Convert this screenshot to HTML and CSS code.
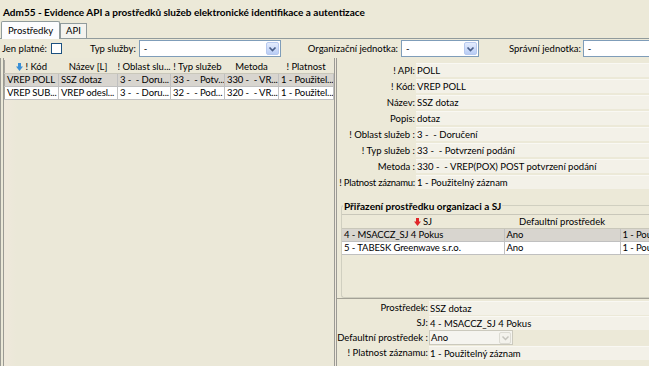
FILE: index.html
```html
<!DOCTYPE html>
<html lang="cs">
<head>
<meta charset="utf-8">
<title>Adm55</title>
<link rel="stylesheet" href="styles.css">
</head>
<body>
<div class="title">Adm55 - Evidence API a prostředků služeb elektronické identifikace a autentizace</div>
<div class="tabs">
  <div class="tab active">Prostředky</div>
  <div class="tab">API</div>
</div>
<div class="filters">
  <span class="lbl">Jen platné:</span>
  <span class="check"></span>
  <span class="lbl gap-typ">Typ služby:</span>
  <div class="combo combo-typ"><span class="val">-</span><span class="btn"><svg width="9" height="8" viewBox="0 0 9 8"><polyline points="1.5,2.5 4.5,5.5 7.5,2.5" fill="none" stroke="#4a5f8a" stroke-width="1.7"/></svg></span></div>
  <span class="lbl gap-org">Organizační jednotka:</span>
  <div class="combo combo-org"><span class="val">-</span><span class="btn"><svg width="9" height="8" viewBox="0 0 9 8"><polyline points="1.5,2.5 4.5,5.5 7.5,2.5" fill="none" stroke="#4a5f8a" stroke-width="1.7"/></svg></span></div>
  <span class="lbl gap-spr">Správní jednotka:</span>
  <div class="text-input"><span class="val">-</span></div>
</div>
<div class="main">
  <div class="left">
    <table class="grid left-grid">
      <colgroup><col class="c1"><col class="c2"><col class="c3"><col class="c4"><col class="c5"><col class="c6"></colgroup>
      <thead>
        <tr>
          <th><svg class="sort" width="7" height="8" viewBox="0 0 7 8"><path d="M2 0h3v3.5h2L3.5 8 0 3.5h2z" fill="#3a8fd6"/></svg>! Kód</th>
          <th>Název [L]</th>
          <th>! Oblast slu...</th>
          <th>! Typ služeb</th>
          <th>Metoda</th>
          <th>! Platnost</th>
        </tr>
      </thead>
      <tbody>
        <tr class="sel">
          <td>VREP POLL</td><td>SSZ dotaz</td><td>3 -  - Doru...</td><td>33 -  - Potv...</td><td>330 -  - VR...</td><td>1 - Použitel...</td>
        </tr>
        <tr>
          <td>VREP SUB...</td><td>VREP odesl...</td><td>3 -  - Doru...</td><td>32 -  - Pod...</td><td>320 -  - VR...</td><td>1 - Použitel...</td>
        </tr>
      </tbody>
    </table>
  </div>
  <div class="right">
    <div class="form">
      <div class="row"><span class="label">! API:</span><span class="field">POLL</span></div>
      <div class="row"><span class="label">! Kód:</span><span class="field">VREP POLL</span></div>
      <div class="row"><span class="label">Název:</span><span class="field">SSZ dotaz</span></div>
      <div class="row"><span class="label">Popis:</span><span class="field">dotaz</span></div>
      <div class="row"><span class="label">! Oblast služeb :</span><span class="field">3 -  - Doručení</span></div>
      <div class="row"><span class="label">! Typ služeb :</span><span class="field">33 -  - Potvrzení podání</span></div>
      <div class="row"><span class="label">Metoda :</span><span class="field">330 -  - VREP(POX) POST potvrzení podání</span></div>
      <div class="row"><span class="label tight">! Platnost záznamu:</span><span class="field">1 - Použitelný záznam</span></div>
    </div>
    <div class="group">
      <div class="group-title">Přiřazení prostředku organizaci a SJ</div>
      <table class="grid sj-grid">
        <colgroup><col class="s1"><col class="s2"><col class="s3"></colgroup>
        <thead>
          <tr>
            <th><svg class="sort" width="7" height="8" viewBox="0 0 7 8"><path d="M2 0h3v3.5h2L3.5 8 0 3.5h2z" fill="#e0262a"/></svg>SJ</th>
            <th>Defaultní prostředek</th>
            <th></th>
          </tr>
        </thead>
        <tbody>
          <tr class="sel"><td>4 - MSACCZ_SJ 4 Pokus</td><td>Ano</td><td>1 - Použitelný záznam</td></tr>
          <tr><td>5 - TABESK Greenwave s.r.o.</td><td>Ano</td><td>1 - Použitelný záznam</td></tr>
        </tbody>
      </table>
    </div>
    <div class="form2">
      <div class="row"><span class="label">Prostředek:</span><span class="field">SSZ dotaz</span></div>
      <div class="row"><span class="label">SJ:</span><span class="field">4 - MSACCZ_SJ 4 Pokus</span></div>
      <div class="row"><span class="label">Defaultní prostředek :</span><div class="combo combo-dis"><span class="val">Ano</span><span class="btn"><svg width="9" height="8" viewBox="0 0 9 8"><polyline points="1.5,2.5 4.5,5.5 7.5,2.5" fill="none" stroke="#c4c3bc" stroke-width="1.5"/></svg></span></div></div>
      <div class="row"><span class="label">! Platnost záznamu:</span><span class="field">1 - Použitelný záznam</span></div>
    </div>
  </div>
</div>
</body>
</html>
```
FILE: styles.css
```css
html, body {
  margin: 0;
  padding: 0;
}
body {
  width: 649px;
  height: 366px;
  overflow: hidden;
  background: #ece9d8;
  font-family: Lato, "Noto Sans", sans-serif;
  font-size: 9.5px;
  color: #000;
}
.title {
  height: 19px;
  padding: 2px 0 0 3px;
  line-height: 20px;
  font-size: 10px;
  font-weight: bold;
  white-space: nowrap;
}
.tabs {
  display: flex;
  align-items: flex-end;
  height: 17px;
  padding-left: 1px;
  border-bottom: 1px solid #919b9c;
}
.tab {
  height: 14px;
  line-height: 14px;
  padding: 0 5px;
  border: 1px solid #919b9c;
  border-bottom: none;
  background: #f4f3ee;
}
.tab.active {
  height: 17px;
  line-height: 17px;
  padding: 0 6px;
  background: #fcfcfe;
  margin-bottom: -1px;
  border-radius: 2px 2px 0 0;
}
.filters {
  display: flex;
  align-items: center;
  height: 19px;
  padding-left: 2px;
  white-space: nowrap;
  overflow: hidden;
}
.filters > * {
  flex-shrink: 0;
}
.check {
  width: 9px;
  height: 9px;
  border: 1px solid #1c5180;
  background: #fff;
  margin-left: 4px;
}
.gap-typ { margin-left: 28px; }
.gap-org { margin-left: 27px; }
.gap-spr { margin-left: 30px; }
.combo {
  display: flex;
  align-items: center;
  height: 15px;
  border: 1px solid #7f9db9;
  background: #fff;
  margin-left: 3px;
  flex-shrink: 0;
}
.combo .val {
  flex: 1;
  padding-left: 4px;
}
.combo .btn {
  width: 13px;
  height: 13px;
  margin-right: 1px;
  border: 1px solid #b7c9ef;
  border-radius: 2px;
  background: linear-gradient(#e4ecfd, #b9cdf5);
  display: flex;
  align-items: center;
  justify-content: center;
  box-sizing: border-box;
}
.combo-typ { width: 140px; }
.combo-org { width: 76px; }
.text-input {
  margin-left: 2px;
  width: 90px;
  height: 15px;
  line-height: 15px;
  border: 1px solid #7f9db9;
  background: #fff;
}
.text-input .val { padding-left: 4px; }

.main {
  display: flex;
  height: 308px;
}
.left {
  width: 337px;
  flex-shrink: 0;
  box-sizing: border-box;
  border-left: 4px double #9b9a94;
  border-right: 3px double #9b9a94;
  background: linear-gradient(to right, #efe8dc, #ebe8d8 12px);
  padding-top: 2px;
}
.grid {
  border-collapse: collapse;
  table-layout: fixed;
  white-space: pre;
}
.grid th {
  font-weight: normal;
  height: 13px;
  padding: 0;
  text-align: center;
  border-bottom: 1px solid #c9c7ba;
  overflow: hidden;
  line-height: 13px;
}
.grid td {
  height: 12px;
  line-height: 12px;
  padding: 0 0 0 2px;
  border: 1px solid #c0c0c0;
  background: #fff;
  overflow: hidden;
  letter-spacing: -0.1px;
}
.grid tr.sel td {
  background: #d8d5cf;
}
.sort {
  margin-right: 2px;
  vertical-align: -1px;
}
.left-grid {
  width: 329px;
  border-left: 1px solid #a8a79f;
}
.left-grid td:first-child { border-left: none; }
.left-grid .c1 { width: 54px; }
.left-grid .c2 { width: 59px; }
.left-grid .c3 { width: 53px; }
.left-grid .c4 { width: 54px; }
.left-grid .c5 { width: 54px; }
.left-grid .c6 { width: 55px; }

.right {
  flex: 1;
  min-width: 0;
  overflow: hidden;
  display: flex;
  flex-direction: column;
}
.form {
  padding-top: 4px;
}
.row {
  display: flex;
  align-items: center;
  height: 16px;
  white-space: pre;
}
.label {
  display: flex;
  justify-content: flex-end;
  flex-shrink: 0;
  padding-right: 1px;
  white-space: pre;
}
.label.tight {
  letter-spacing: -0.25px;
}
.form .label {
  width: 78px;
}
.field {
  flex: 1;
  height: 14px;
  line-height: 14px;
  padding-left: 1px;
  background: #f3f1e8;
  border-top: 1px solid #f9f8f3;
  box-sizing: border-box;
}
.group {
  margin: 15px 0 0 4px;
  height: 91px;
  border: 1px solid #d0cfc0;
  border-right: none;
  border-radius: 3px 0 0 3px;
}
.group-title {
  width: fit-content;
  margin: -7px 0 0 1px;
  padding: 0 1px;
  height: 14px;
  line-height: 14px;
  font-size: 10px;
  font-weight: bold;
  background: #ece9d8;
}
.sj-grid {
  width: 340px;
  margin-top: 1px;
  border-top: 1px solid #c9c7ba;
}
.sj-grid td:first-child { border-left: none; }
.sj-grid .s1 { width: 162px; }
.sj-grid .s2 { width: 116px; }
.sj-grid .s3 { width: 62px; }
.form2 {
  border-top: 1px solid #a3a196;
  padding-top: 1px;
}
.form2 .row {
  height: 15px;
}
.form2 .label {
  width: 91px;
}
.combo-dis {
  width: 82px;
  margin-left: 0;
  height: 13px;
  border-color: #cbc9bd;
  background: #f5f4ef;
}
.combo-dis .val { padding-left: 1px; }
.combo-dis .btn {
  border-color: #dcdbd3;
  background: #f3f2ec;
  width: 12px;
  height: 12px;
}
```
